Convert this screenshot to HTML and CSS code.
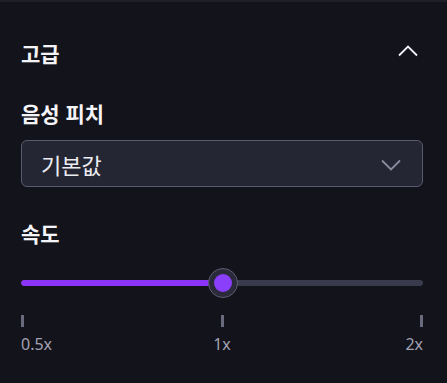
FILE: index.html
```html
<!DOCTYPE html>
<html lang="ko">
<head>
<meta charset="utf-8">
<link rel="stylesheet" href="styles.css">
</head>
<body>
<div class="panel">
  <div class="section-head">
    <h2 class="title">고급</h2>
    <svg class="chev-up" width="20" height="12" viewBox="0 0 20 12"><polyline points="1,10.5 10,1.5 19,10.5" fill="none" stroke="#f2f2f6" stroke-width="1.8"/></svg>
  </div>
  <div class="label">음성 피치</div>
  <div class="select">
    <span class="select-text">기본값</span>
    <svg class="chev-down" width="20" height="12" viewBox="0 0 20 12"><polyline points="1,1.5 10,10.5 19,1.5" fill="none" stroke="#8c8ca0" stroke-width="1.8"/></svg>
  </div>
  <div class="label">속도</div>
  <div class="slider">
    <div class="track"><div class="fill" style="width:50%"></div></div>
    <div class="thumb" style="left:50%"><div class="thumb-dot"></div></div>
  </div>
  <div class="ticks">
    <span class="tick"></span><span class="tick"></span><span class="tick"></span>
  </div>
  <div class="tick-labels">
    <span class="tl-start">0.5x</span><span class="tl-mid">1x</span><span class="tl-end">2x</span>
  </div>
</div>
</body>
</html>
```
FILE: styles.css
```css
html, body {
  margin: 0;
  padding: 0;
  background: #13131b;
  height: 100%;
}
body {
  border-top: 2px solid #1f1f29;
  box-sizing: border-box;
  font-family: "Noto Sans CJK KR", "Noto Sans", sans-serif;
  color: #f4f4f8;
}
.panel {
  padding: 37px 24px 0 21px;
}
.section-head {
  display: flex;
  justify-content: space-between;
  align-items: center;
  height: 28px;
}
.title {
  margin: 0;
  font-size: 21px;
  font-weight: 700;
  line-height: 28px;
}
.chev-up {
  margin-right: 5px;
  margin-top: -4px;
}
.label {
  margin-top: 32px;
  font-size: 21px;
  font-weight: 700;
  line-height: 28px;
}
.select {
  margin-top: 13px;
  height: 47px;
  box-sizing: border-box;
  border: 1px solid #5b5b70;
  border-radius: 6px;
  background: #252633;
  display: flex;
  align-items: center;
  justify-content: space-between;
  padding: 0 21px 0 19px;
}
.select-text {
  font-size: 22px;
  font-weight: 400;
  color: #ececf2;
  line-height: 28px;
}
.chev-down {
  margin-top: 3px;
}
.slider {
  position: relative;
  margin-top: 21px;
  height: 30px;
  display: flex;
  align-items: center;
}
.track {
  width: 100%;
  height: 6px;
  border-radius: 3px;
  background: #393a4c;
  overflow: hidden;
}
.fill {
  height: 100%;
  background: #8b33f6;
  border-radius: 3px;
}
.thumb {
  position: absolute;
  top: 0;
  width: 30px;
  height: 30px;
  margin-left: -14px;
  box-sizing: border-box;
  border-radius: 50%;
  border: 1.5px solid #5d5d72;
  background: #2a2a3a;
  display: flex;
  align-items: center;
  justify-content: center;
}
.thumb-dot {
  width: 18px;
  height: 18px;
  border-radius: 50%;
  background: #8a3ffb;
}
.ticks {
  margin-top: 17px;
  display: flex;
  justify-content: space-between;
  height: 12px;
}
.tick {
  width: 3px;
  height: 12px;
  background: #6a6a7e;
}
.tick-labels {
  margin-top: 7px;
  display: grid;
  grid-template-columns: 1fr auto 1fr;
  font-family: "Noto Sans", sans-serif;
  font-size: 16px;
  line-height: 20px;
  color: #a2a2b2;
}
.tl-mid {
  text-align: center;
}
.tl-end {
  text-align: right;
}
```
